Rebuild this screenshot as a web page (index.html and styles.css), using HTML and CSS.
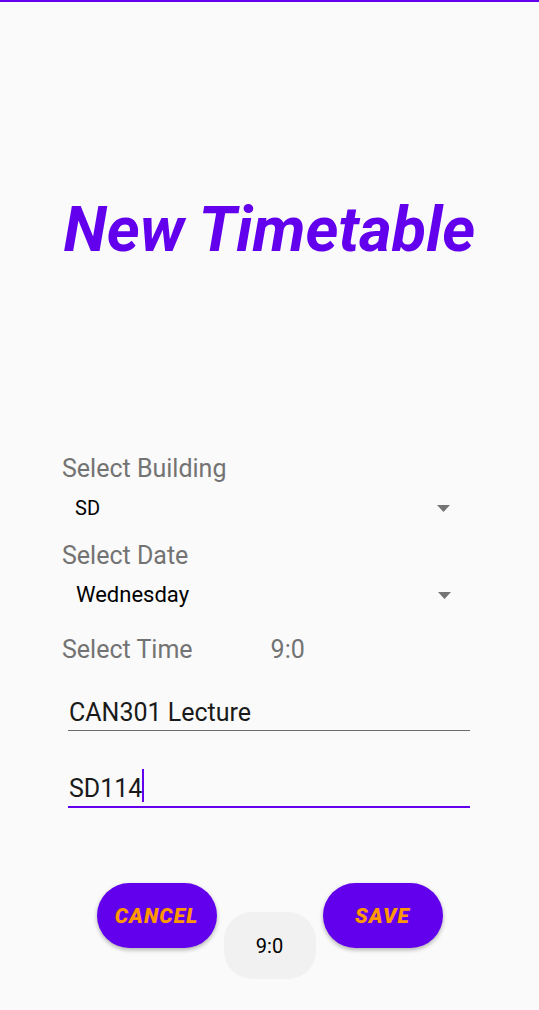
FILE: index.html
```html
<!DOCTYPE html>
<html lang="en">
<head>
<meta charset="utf-8">
<title>New Timetable</title>
<link rel="stylesheet" href="styles.css">
</head>
<body>
<div class="topbar"></div>
<h1 class="title">New Timetable</h1>
<div class="form">
  <div class="label label-building">Select Building</div>
  <div class="spinner spinner-building">
    <span class="spinner-text">SD</span>
    <svg class="arrow" width="13" height="7" viewBox="0 0 13 7"><path d="M0 0H13L6.5 7Z" fill="#757575"/></svg>
  </div>
  <div class="label label-date">Select Date</div>
  <div class="spinner spinner-date">
    <span class="spinner-text">Wednesday</span>
    <svg class="arrow" width="13" height="7" viewBox="0 0 13 7"><path d="M0 0H13L6.5 7Z" fill="#757575"/></svg>
  </div>
  <div class="label time-row">
    <span>Select Time</span>
    <span class="time-value">9:0</span>
  </div>
  <div class="edit edit-name">CAN301 Lecture</div>
  <div class="edit edit-room focused">SD114<span class="caret"></span></div>
</div>
<div class="actions">
  <button class="pill">CANCEL</button>
  <div class="chip">9:0</div>
  <button class="pill">SAVE</button>
</div>
</body>
</html>
```
FILE: styles.css
```css
html, body {
  margin: 0;
  padding: 0;
  background: #fafafa;
  font-family: Roboto, "Noto Sans", sans-serif;
}
body {
  width: 539px;
  height: 1010px;
  overflow: hidden;
}
.topbar {
  height: 2px;
  background: #6200ee;
}
.title {
  margin: 190px 0 0;
  font-size: 63px;
  line-height: 75px;
  font-weight: 700;
  font-style: italic;
  color: #6200ee;
  text-align: center;
}
.form {
  padding: 0 69px 0 62px;
  margin-top: 187px;
}
.label {
  font-size: 25px;
  line-height: 29px;
  color: #737373;
}
.label-date {
  margin-top: 13px;
}
.spinner {
  display: flex;
  align-items: center;
  justify-content: space-between;
  height: 40px;
  margin-top: 5px;
  padding: 0 20px 0 13px;
}
.spinner-text {
  font-size: 20px;
  line-height: 24px;
  color: #000;
}
.spinner-date {
  padding-right: 19px;
}
.spinner-date .spinner-text {
  font-size: 22px;
  line-height: 26px;
  padding-left: 1px;
}
.arrow {
  display: block;
}
.time-row {
  margin-top: 20px;
  display: flex;
}
.time-value {
  margin-left: 78px;
}
.edit {
  margin-left: 6px;
  padding: 0 0 3px 1px;
  font-size: 25px;
  line-height: 29px;
  color: #1a1a1a;
  border-bottom: 1px solid #6b6b6b;
}
.edit-name {
  margin-top: 34px;
}
.edit-room {
  margin-top: 43px;
}
.edit.focused {
  border-bottom: 2px solid #6200ee;
  padding-bottom: 3px;
}
.caret {
  display: inline-block;
  width: 2px;
  height: 33px;
  margin-top: -6px;
  vertical-align: -5px;
  background: #6200ee;
}
.actions {
  display: flex;
  justify-content: center;
  align-items: flex-start;
  gap: 7px;
  margin-top: 75px;
}
.pill {
  width: 120px;
  height: 65px;
  border: none;
  border-radius: 33px;
  background: #6200ee;
  color: #ff9800;
  font-family: Roboto, sans-serif;
  font-size: 21px;
  letter-spacing: 0.05em;
  font-weight: 900;
  font-style: italic;
  box-shadow: 0 2px 4px rgba(0, 0, 0, 0.3);
  padding: 0;
}
.chip {
  width: 92px;
  height: 67px;
  margin-top: 29px;
  border-radius: 28px;
  background: #f1f1f1;
  display: flex;
  align-items: center;
  justify-content: center;
  font-size: 20px;
  color: #000;
}
```
